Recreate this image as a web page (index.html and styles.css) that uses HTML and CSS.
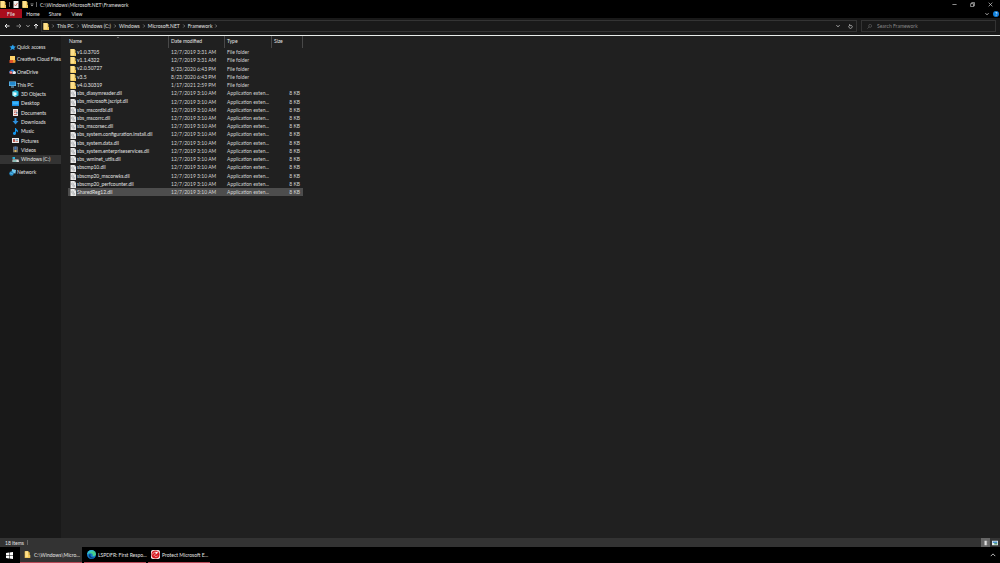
FILE: index.html
```
<!DOCTYPE html>
<html lang="en">
<head>
<meta charset="utf-8">
<title>C:\Windows\Microsoft.NET\Framework</title>
<link rel="stylesheet" href="styles.css">
</head>
<body>
<svg class="sprite" aria-hidden="true">
  <symbol id="folder" viewBox="0 0 12 14"><path fill="#e8bd4c" d="M1 0h8v2h2v12H1z"/><path fill="#ffe08a" d="M1 0h8v13H1z"/><path fill="#f2c95c" d="M9 8h3v6H9z"/></symbol>
  <symbol id="file" viewBox="0 0 12 14"><path fill="#e9e9e9" d="M1 0h8l3 3v11H1z"/><path fill="#aaa" d="M9 0v3h3z"/><circle cx="5" cy="6" r="2" fill="none" stroke="#8c9296"/><circle cx="7.500" cy="10" r="1.800" fill="none" stroke="#8c9296"/></symbol>
  <symbol id="chev" viewBox="0 0 8 8"><path d="M2.500 1l3 3-3 3" fill="none" stroke="#aaa" stroke-width="1.200"/></symbol>
  <symbol id="down" viewBox="0 0 8 8"><path d="M1 2.500l3 3 3-3" fill="none" stroke="#ccc" stroke-width="1.800"/></symbol>
  <symbol id="up" viewBox="0 0 8 8"><path d="M1 5.500l3-3 3 3" fill="none" stroke="#ccc" stroke-width="1.200"/></symbol>
  <symbol id="arrow" viewBox="0 0 12 12"><path d="M11 6H2M6 2L2 6l4 4" fill="none" stroke="currentColor" stroke-width="2"/></symbol>
</svg>

<div class="window">
  <header class="titlebar">
    <svg class="ico"><use href="#folder"/></svg>
    <span class="bar"></span>
    <svg class="ico" viewBox="0 0 12 14"><path fill="#f2f2f2" d="M1 0h10v14H1z"/><path d="M3 7l2 3 4-6" fill="none" stroke="#d2573f" stroke-width="1.500"/></svg>
    <svg class="ico folder-btn"><use href="#folder"/></svg>
    <svg class="mini" viewBox="0 0 8 8"><path d="M1 1.500h6" stroke="#bbb"/><path d="M1 3.500h6l-3 3z" fill="#bbb"/></svg>
    <span class="bar end"></span>
    <h1 class="title">C:\Windows\Microsoft.NET\Framework</h1>
    <div class="controls">
      <button aria-label="Minimize"><svg viewBox="0 0 12 12"><path d="M1 6h10" stroke="#ddd" stroke-width="1.500"/></svg></button>
      <button aria-label="Restore"><svg viewBox="0 0 12 12"><path d="M1.500 4h7v7h-7zM4 4V1.500h7V9H8.500" fill="none" stroke="#ddd" stroke-width="1.500"/></svg></button>
      <button aria-label="Close"><svg viewBox="0 0 12 12"><path d="M1.500 1.500l9 9m0-9l-9 9" stroke="#ddd" stroke-width="1.500"/></svg></button>
    </div>
  </header>

  <nav class="tabs" aria-label="Ribbon">
    <button class="tab file">File</button>
    <button class="tab">Home</button>
    <button class="tab">Share</button>
    <button class="tab">View</button>
    <div class="help">
      <button aria-label="Expand ribbon"><svg class="mini"><use href="#down"/></svg></button>
      <button class="round" aria-label="Help">?</button>
    </div>
  </nav>

  <div class="address-row">
    <div class="history">
      <button aria-label="Back"><svg class="arr"><use href="#arrow"/></svg></button>
      <button class="dim" aria-label="Forward"><svg class="arr flip"><use href="#arrow"/></svg></button>
      <button class="small" aria-label="Recent"><svg class="mini"><use href="#down"/></svg></button>
      <button class="small" aria-label="Up"><svg class="arr turn"><use href="#arrow"/></svg></button>
    </div>
    <div class="address">
      <svg class="ico"><use href="#folder"/></svg>
      <svg class="sep"><use href="#chev"/></svg><a href="#">This PC</a>
      <svg class="sep"><use href="#chev"/></svg><a href="#">Windows (C:)</a>
      <svg class="sep"><use href="#chev"/></svg><a href="#">Windows</a>
      <svg class="sep"><use href="#chev"/></svg><a href="#">Microsoft.NET</a>
      <svg class="sep"><use href="#chev"/></svg><a href="#">Framework</a>
      <svg class="sep"><use href="#chev"/></svg>
      <div class="address-tools">
        <button aria-label="Previous locations"><svg class="mini"><use href="#down"/></svg></button>
        <button aria-label="Refresh"><svg class="refresh" viewBox="0 0 12 12"><path d="M4 3a4 4 0 1 0 4 0M4 0v4h4" fill="none" stroke="#bbb" stroke-width="1.800"/></svg></button>
      </div>
    </div>
    <label class="search">
      <svg class="lens" viewBox="0 0 12 12"><circle cx="7.500" cy="4.500" r="3.500" fill="none" stroke="#888"/><path d="M5 7l-4 4" stroke="#888"/></svg>
      <input type="text" placeholder="Search Framework" aria-label="Search Framework">
    </label>
  </div>

  <div class="body">
    <aside class="sidebar">
      <div class="roots">
        <a href="#"><svg class="pic" viewBox="0 0 14 14"><path fill="#28a0ee" d="M8 1l1.500 3.500 4 .5-3 3 .5 4-4-2-5 3 2.500-5L1 5l4-.5z"/></svg>Quick access</a>
        <a href="#"><svg class="pic" viewBox="0 0 14 14"><path fill="#ffd56a" d="M2 0h10v13H2z"/><path fill="#e2542b" d="M1 8h7v6H1z"/><path fill="#f49a28" d="M8 8h5v5H8z"/></svg>Creative Cloud Files</a>
        <a href="#"><svg class="pic" viewBox="0 0 14 14"><path fill="#2587d8" d="M3 11a3 3 0 0 1 0-6 4 4 0 0 1 7-1l2 7z"/><path fill="#e9edf2" d="M7 11l1-4 4-1 2 3-1 3H7z"/><circle cx="4" cy="9" r="3" fill="#e64c45"/><path d="M3 8l2 2m0-2l-2 2" stroke="#fff"/></svg>OneDrive</a>
      </div>
      <div class="tree">
        <a href="#"><svg class="pic" viewBox="0 0 14 14"><path fill="#7bc9f5" d="M0 1h14v9H0z"/><path fill="#2387ca" d="M1 2h12v7H1z"/><path fill="#83bce0" d="M4 11h6v2H4z"/></svg>This PC</a>
        <a class="child" href="#"><svg class="pic" viewBox="0 0 14 14"><path fill="#26b7d6" d="M1 3l6-3 6 3v8l-6 3-6-3z"/><path fill="#a4f0f8" d="M1 3l6 3v8l-6-3z"/><path fill="#e8fdff" d="M4 5h5v5H4z"/></svg>3D Objects</a>
        <a class="child" href="#"><svg class="pic" viewBox="0 0 14 14"><path fill="#1689e0" d="M0 2h14v10H0z"/><path fill="#38b3fa" d="M1 3h12v6H1z"/></svg>Desktop</a>
        <a class="child" href="#"><svg class="pic" viewBox="0 0 14 14"><path fill="#f1e8e4" d="M2 0h10v14H2z"/><path d="M4 4h6M4 7h3M4 11h6" stroke="#c14d43" stroke-width="1.500"/><path fill="#657f9c" d="M8 6h3v3H8z"/></svg>Documents</a>
        <a class="child" href="#"><svg class="pic" viewBox="0 0 14 14"><path fill="#2e91df" d="M5 0h4v6h4l-6 7-6-7h4z"/></svg>Downloads</a>
        <a class="child" href="#"><svg class="pic" viewBox="0 0 14 14"><path fill="#1395ec" d="M6 0h2c0 3 4 3 4 7l-2 2c0-3-2-3-2-3v5a3 3 0 1 1-2-3z"/></svg>Music</a>
        <a class="child" href="#"><svg class="pic" viewBox="0 0 14 14"><path fill="#eee" d="M0 2h14v10H0z"/><path fill="#ba5a52" d="M2 4h4v6H2z"/><path fill="#709cb7" d="M7 4h5v3H7z"/><path fill="#d28a79" d="M7 8h5v2H7z"/></svg>Pictures</a>
        <a class="child" href="#"><svg class="pic" viewBox="0 0 14 14"><path fill="#555" d="M2 1h10v12H2z"/><path fill="#4279bc" d="M5 1h4v6H5z"/><path fill="#d8b75d" d="M5 8h4v4H5z"/><path d="M3 2v10M11 2v10" stroke="#bbb" stroke-dasharray="1 1"/></svg>Videos</a>
        <a class="child selected" href="#"><svg class="pic" viewBox="0 0 14 14"><path fill="#2ab5df" d="M1 2h5v4H1z"/><path fill="#ddd" d="M1 7h12l1 5H1z"/><path fill="#349b8e" d="M2 9h7v2H2z"/></svg>Windows (C:)</a>
      </div>
      <a class="network" href="#"><svg class="pic" viewBox="0 0 14 14"><path fill="#77cbf1" d="M6 0l8 2-1 7-8-1z"/><circle cx="5" cy="9" r="4.500" fill="#258bc7"/><path d="M2 8l6 2" stroke="#8dddf7"/></svg>Network</a>
    </aside>

    <main class="content">
      <table class="files">
        <colgroup><col class="c-name"><col class="c-date"><col class="c-type"><col class="c-size"></colgroup>
        <thead>
          <tr><th>Name<svg class="sort"><use href="#up"/></svg></th><th>Date modified</th><th>Type</th><th>Size</th></tr>
        </thead>
        <tbody>
          <tr><td><svg class="ico"><use href="#folder"/></svg>v1.0.3705</td><td>12/7/2019 3:31 AM</td><td>File folder</td><td></td></tr>
          <tr><td><svg class="ico"><use href="#folder"/></svg>v1.1.4322</td><td>12/7/2019 3:31 AM</td><td>File folder</td><td></td></tr>
          <tr><td><svg class="ico"><use href="#folder"/></svg>v2.0.50727</td><td>8/23/2020 6:43 PM</td><td>File folder</td><td></td></tr>
          <tr><td><svg class="ico"><use href="#folder"/></svg>v3.5</td><td>8/23/2020 6:43 PM</td><td>File folder</td><td></td></tr>
          <tr><td><svg class="ico"><use href="#folder"/></svg>v4.0.30319</td><td>1/17/2021 2:59 PM</td><td>File folder</td><td></td></tr>
          <tr><td><svg class="ico"><use href="#file"/></svg>sbs_diasymreader.dll</td><td>12/7/2019 3:10 AM</td><td>Application exten...</td><td>8 KB</td></tr>
          <tr><td><svg class="ico"><use href="#file"/></svg>sbs_microsoft.jscript.dll</td><td>12/7/2019 3:10 AM</td><td>Application exten...</td><td>8 KB</td></tr>
          <tr><td><svg class="ico"><use href="#file"/></svg>sbs_mscordbi.dll</td><td>12/7/2019 3:10 AM</td><td>Application exten...</td><td>8 KB</td></tr>
          <tr><td><svg class="ico"><use href="#file"/></svg>sbs_mscorrc.dll</td><td>12/7/2019 3:10 AM</td><td>Application exten...</td><td>8 KB</td></tr>
          <tr><td><svg class="ico"><use href="#file"/></svg>sbs_mscorsec.dll</td><td>12/7/2019 3:10 AM</td><td>Application exten...</td><td>8 KB</td></tr>
          <tr><td><svg class="ico"><use href="#file"/></svg>sbs_system.configuration.install.dll</td><td>12/7/2019 3:10 AM</td><td>Application exten...</td><td>8 KB</td></tr>
          <tr><td><svg class="ico"><use href="#file"/></svg>sbs_system.data.dll</td><td>12/7/2019 3:10 AM</td><td>Application exten...</td><td>8 KB</td></tr>
          <tr><td><svg class="ico"><use href="#file"/></svg>sbs_system.enterpriseservices.dll</td><td>12/7/2019 3:10 AM</td><td>Application exten...</td><td>8 KB</td></tr>
          <tr><td><svg class="ico"><use href="#file"/></svg>sbs_wminet_utils.dll</td><td>12/7/2019 3:10 AM</td><td>Application exten...</td><td>8 KB</td></tr>
          <tr><td><svg class="ico"><use href="#file"/></svg>sbscmp10.dll</td><td>12/7/2019 3:10 AM</td><td>Application exten...</td><td>8 KB</td></tr>
          <tr><td><svg class="ico"><use href="#file"/></svg>sbscmp20_mscorwks.dll</td><td>12/7/2019 3:10 AM</td><td>Application exten...</td><td>8 KB</td></tr>
          <tr><td><svg class="ico"><use href="#file"/></svg>sbscmp20_perfcounter.dll</td><td>12/7/2019 3:10 AM</td><td>Application exten...</td><td>8 KB</td></tr>
          <tr class="selected"><td><svg class="ico"><use href="#file"/></svg>SharedReg12.dll</td><td>12/7/2019 3:10 AM</td><td>Application exten...</td><td>8 KB</td></tr>
        </tbody>
      </table>
    </main>
  </div>

  <footer class="status">
    <span>18 items</span><span class="bar"></span>
    <div class="views">
      <button class="on" aria-label="Details view"><svg viewBox="0 0 8 8"><path fill="#ddd" d="M2 1h3v6H2z"/><path d="M6 2h1M6 4h1M6 6h1" stroke="#999"/></svg></button>
      <button aria-label="Large icons view"><svg viewBox="0 0 8 8"><path fill="#e4edf0" d="M0 1h8v6H0z"/><path fill="#4b93cf" d="M1 2h6v2H1z"/><path fill="#599c78" d="M3 4h4v2H3z"/></svg></button>
    </div>
  </footer>
</div>

<footer class="taskbar">
  <button class="start" aria-label="Start"><svg viewBox="0 0 14 14"><path fill="#fff" d="M0 2l6-1v5.500H0zM7 1l7-1v6.500H7zM0 7.500h6V13l-6-1zM7 7.500h7V14l-7-1z"/></svg></button>
  <button class="task active"><svg class="task-ico" viewBox="-2 0 16 14"><path fill="#e8bd4c" d="M1 1h7v2h2v10H1z"/><path fill="#ffe08a" d="M2 1h5v11H2z"/><path fill="#f2c95c" d="M7 8h4v5H7z"/></svg>C:\Windows\Micro...</button>
  <button class="task"><svg class="task-ico" viewBox="0 0 20 20"><circle cx="10" cy="10" r="10" fill="#1479cd"/><path fill="#45cf8d" d="M2 5C6-2 19-1 20 9c0 4-5 6-8 4 2-3 0-6-4-6-3 0-5 1-7 2z"/><path fill="#31bde5" d="M1 7c4-8 12-7 14-4C9 2 4 5 1 10z"/><path fill="#0b3f78" d="M8 9c-2 5 3 9 9 7-4 5-12 4-13-3 0-3 2-4 4-4z"/></svg>LSPDFR: First Respo...</button>
  <button class="task"><svg class="task-ico" viewBox="0 0 20 20"><rect width="20" height="20" rx="4" fill="#f4eeee"/><circle cx="10" cy="10" r="9" fill="#d71920"/><path d="M3 10c2-5 6-6 9-5l4-1-3 4c-3 0-5 2-6 4 2 3 5 3 8 1" fill="none" stroke="#fff" stroke-width="1.200"/><path d="M9 5l6-1-3 5z" fill="#fff"/></svg>Protect Microsoft E...</button>
  <button class="tray" aria-label="Show hidden icons"><svg class="tray-ico"><use href="#up"/></svg></button>
</footer>
</body>
</html>
```
FILE: styles.css
```
* { box-sizing: border-box; }
body {
  margin: 0;
  min-height: 100vh;
  display: flex;
  flex-direction: column;
  background: #000;
  color: #e4e4e4;
  font: 5px/8px Lato, "Open Sans", sans-serif;
  white-space: nowrap;
}
button {
  padding: 0;
  border: 0;
  background: none;
  color: inherit;
  font: inherit;
  display: flex;
  align-items: center;
  justify-content: center;
}
a { color: inherit; text-decoration: none; }
svg { display: block; flex: none; }
.sprite { position: absolute; width: 0; height: 0; }
.ico { width: 6px; height: 7px; }
.mini { width: 4px; height: 4px; }
.bar { width: 1px; height: 5px; background: #666; }

.window { flex: 1; display: flex; flex-direction: column; }
.titlebar { display: flex; align-items: center; height: 9px; }
.titlebar .bar { margin: 0 3px; }
.titlebar .end { margin: 0 3px 0 2px; }
.folder-btn { margin: 0 2px 0 3px; }
.title { margin: 0; font-size: 5px; font-weight: 400; }
.controls { display: flex; margin-left: auto; }
.controls button { width: 18px; height: 8px; }
.controls button:last-child { margin-right: 1px; }
.controls svg { width: 5px; height: 5px; }

.tabs { display: flex; height: 9px; }
.tab { width: 22px; }
.tab.file { background: #a80d1c; }
.help { display: flex; align-items: center; gap: 4px; margin: 0 1px 0 auto; }
.round { width: 6px; height: 6px; border-radius: 50%; background: #1180dc; color: #fff; }

.address-row {
  display: flex;
  align-items: center;
  height: 18px;
  padding: 0 4px 1px 2px;
  gap: 4px;
  background: #191919;
  border-bottom: 1px solid #e8ecea;
}
.history { display: flex; align-items: center; justify-content: space-between; width: 37px; margin-right: -2px; }
.history button { width: 10px; height: 10px; color: #eee; }
.history .dim { color: #888; }
.history .small { width: 6px; }
.arr { width: 6px; height: 6px; }
.flip { transform: rotate(180deg); }
.turn { transform: rotate(90deg); }
.address {
  flex: 1;
  display: flex;
  align-items: center;
  height: 12px;
  padding-left: 1px;
  border: 1px solid #333;
}
.sep { width: 4px; height: 4px; margin: 0 2px; }
.address-tools { display: flex; align-items: center; margin-left: auto; }
.address-tools button { width: 12px; }
.refresh { width: 5px; height: 5px; }
.search {
  display: flex;
  align-items: center;
  width: 135px;
  height: 12px;
  padding-left: 5px;
  gap: 5px;
  border: 1px solid #333;
}
.lens { width: 5px; height: 5px; }
.search input {
  flex: 1;
  min-width: 0;
  padding: 0;
  border: 0;
  outline: 0;
  background: none;
  color: #ddd;
  font: inherit;
}
.search input::placeholder { color: #888; opacity: 1; }

.body { flex: 1; display: flex; background: #202020; }
.sidebar { width: 61px; padding-top: 5px; background: #191919; }
.sidebar a { display: flex; align-items: center; gap: 1px; padding-left: 9px; }
.sidebar .child { gap: 2px; padding-left: 12px; }
.pic { width: 7px; height: 7px; }
.roots { display: grid; grid-auto-rows: 1fr; height: 37px; }
.tree { display: grid; grid-auto-rows: 1fr; height: 84px; margin: 2px 0; }
.sidebar .selected { background: #333; }
.network { height: 12px; }

.content { flex: 1; padding-left: 7px; }
.files { width: 235px; height: 160px; table-layout: fixed; border-collapse: separate; border-spacing: 0; }
.c-name { width: 101px; }
.c-date { width: 56px; }
.c-type { width: 47px; }
.c-size { width: 31px; }
.files th {
  height: 12px;
  padding: 0 0 2px 2px;
  border-right: 1px solid #484848;
  font-weight: 400;
  text-align: left;
  position: relative;
}
.files th:first-child { padding-left: 1px; }
.sort { position: absolute; top: 0; left: 48px; width: 4px; height: 3px; }
.files td { padding: 0 0 0 2px; color: #d4d4d4; }
.files td:first-child { color: #e4e4e4; }
.files td:last-child { padding-right: 3px; text-align: right; }
.files td .ico { display: inline-block; vertical-align: middle; margin-right: 1px; }
.files .selected { background: #4d4d4d; }

.status {
  display: flex;
  align-items: center;
  gap: 3px;
  height: 9px;
  padding-left: 5px;
  background: #333;
}
.views { display: flex; margin-left: auto; }
.views button { width: 9px; height: 9px; }
.views button:last-child { margin-right: 1px; }
.views .on { background: #666; }
.views svg { width: 6px; height: 6px; }

.taskbar { display: flex; height: 16px; }
.start { width: 19px; margin-right: 1px; }
.start svg { width: 7px; height: 7px; }
.task {
  justify-content: flex-start;
  width: 62px;
  margin-right: 2px;
  padding-left: 3px;
  gap: 2px;
  border-bottom: 1px solid #b94957;
}
.task.active { background: #333; }
.task-ico { width: 9px; height: 9px; }
.tray { width: 14px; margin-left: auto; }
.tray-ico { width: 6px; height: 6px; }
```
